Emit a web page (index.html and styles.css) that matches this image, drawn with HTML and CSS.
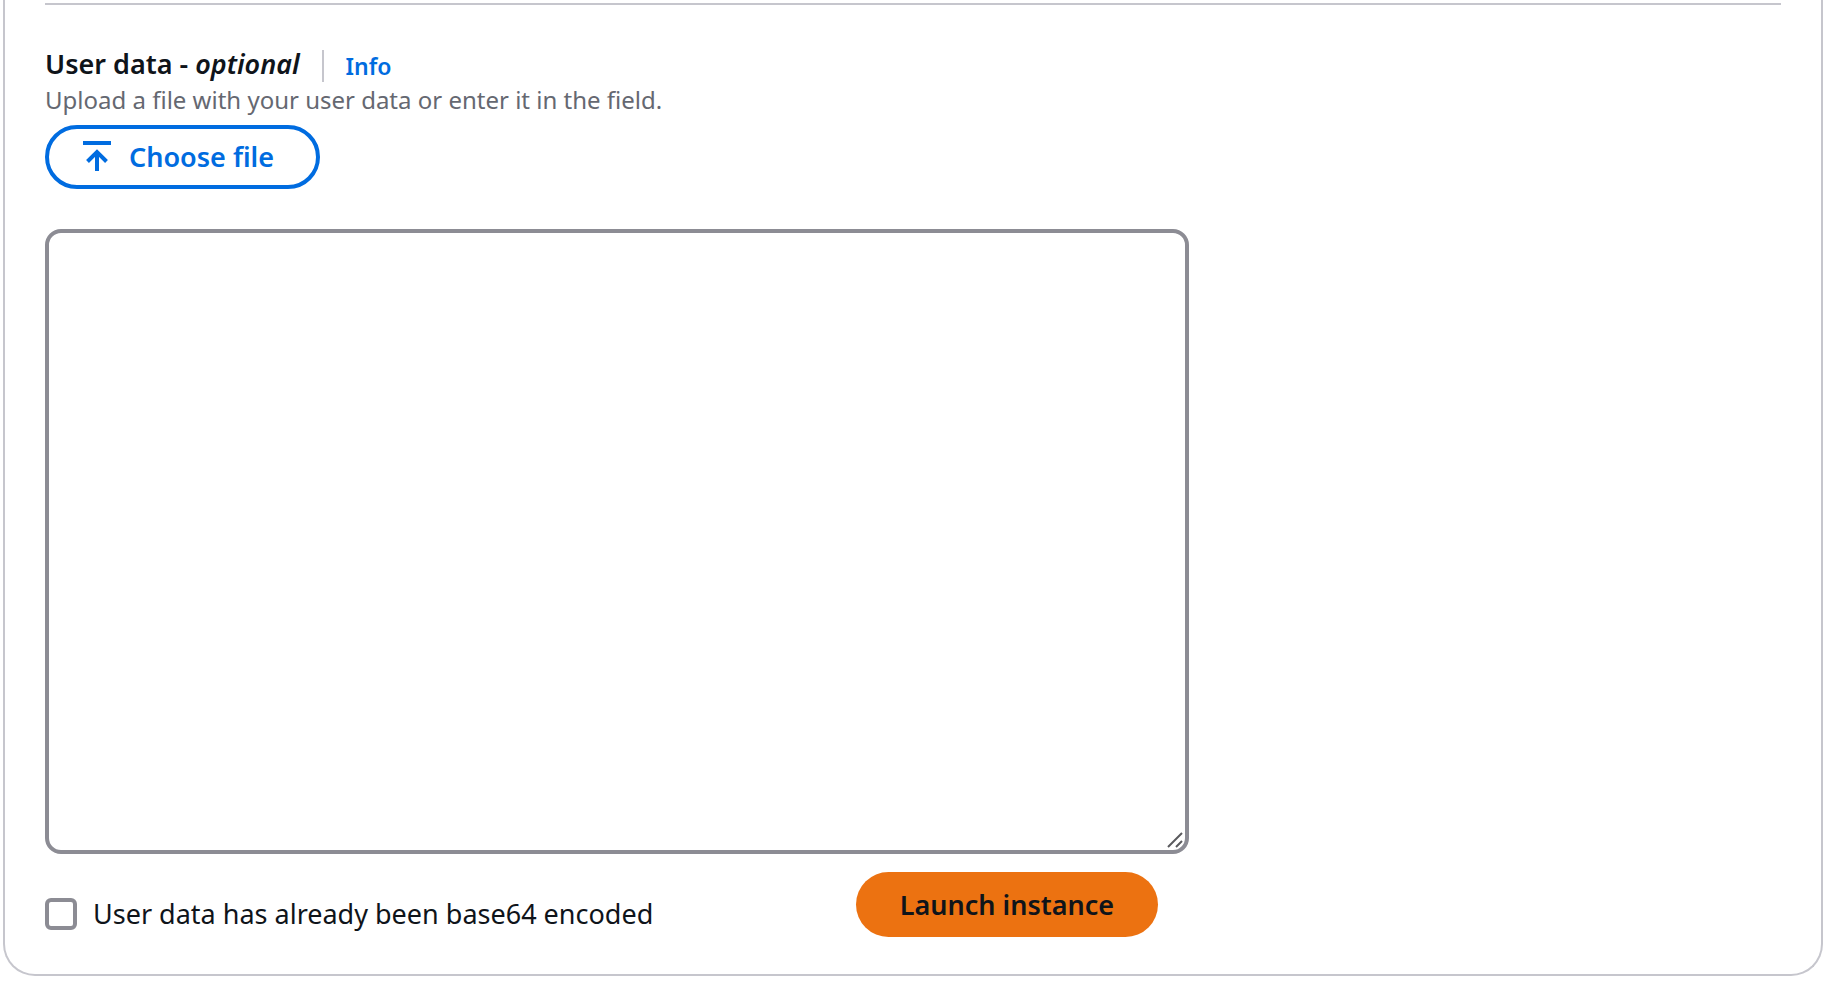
FILE: index.html
```html
<!DOCTYPE html>
<html lang="en">
<head>
<meta charset="utf-8">
<meta name="viewport" content="width=device-width, initial-scale=1">
<title>Launch an instance</title>
<link rel="stylesheet" href="styles.css">
</head>
<body>
<main class="card">
  <hr class="divider">
  <section class="user-data">
    <div class="heading">
      <label class="heading-label" for="user-data">User data - <em>optional</em></label>
      <a class="info-link" href="#">Info</a>
    </div>
    <p class="description" id="user-data-hint">Upload a file with your user data or enter it in the field.</p>
    <button class="button button-outline" type="button">
      <svg class="icon" viewBox="0 0 32 32" aria-hidden="true">
        <path d="M2 2h28M16 30V11M6.5 20.5L16 11l9.5 9.5"/>
      </svg>
      Choose file
    </button>
    <div class="field">
      <textarea class="textarea" id="user-data" aria-describedby="user-data-hint"></textarea>
      <svg class="grip" viewBox="0 0 16 16" aria-hidden="true">
        <path d="M1 15L15 1M9 15l6-6"/>
      </svg>
    </div>
    <div class="actions">
      <label class="check"><input class="check-box" type="checkbox">User data has already been base64 encoded</label>
      <button class="button button-primary" type="button">Launch instance</button>
    </div>
  </section>
</main>
</body>
</html>
```

FILE: styles.css
```css
* {
  box-sizing: border-box;
}

body {
  margin: 0;
  padding: 0 11px 24px 3px;
  background: #fff;
  color: #0f141a;
  font-family: "Noto Sans", "Open Sans", sans-serif;
  font-size: 27px;
  line-height: 36px;
}

.card {
  padding: 3px 40px 37px;
  border: 2px solid #c6c6cd;
  border-top: 0;
  border-radius: 0 0 32px 32px;
}

.divider {
  height: 2px;
  margin: 0;
  border: 0;
  background: #c6c6cd;
}

.user-data {
  width: calc((100% - 20px) * 2 / 3);
  padding-top: 41px;
}

.heading {
  display: flex;
  align-items: flex-end;
  gap: 22px;
  height: 36px;
}

.heading-label {
  font-weight: 600;
}

.info-link {
  padding-left: 22px;
  border-left: 2px solid #c6c6cd;
  color: #006ce0;
  font-size: 23px;
  font-weight: 600;
  line-height: 32px;
  text-decoration: none;
}

.description {
  margin: 0;
  color: #656871;
  font-size: 24px;
}

.button {
  display: flex;
  align-items: center;
  justify-content: center;
  height: 64px;
  border: 0;
  border-radius: 33px;
  font: inherit;
  font-weight: 600;
  white-space: nowrap;
}

.button-outline {
  justify-content: flex-start;
  gap: 16px;
  min-width: 275px;
  margin-top: 7px;
  padding: 0 32px;
  border: 4px solid #006ce0;
  background: #fff;
  color: #006ce0;
}

.button-primary {
  min-width: 302px;
  height: 65px;
  margin-right: 31px;
  padding: 0 40px;
  background: #ec7211;
  color: #0f141a;
}

.icon {
  width: 32px;
  height: 32px;
  fill: none;
  stroke: currentColor;
  stroke-width: 4;
}

.field {
  position: relative;
  margin-top: 40px;
}

.textarea {
  display: block;
  width: 100%;
  height: 625px;
  padding: 8px 24px;
  border: 4px solid #8c8c94;
  border-radius: 16px;
  background: #fff;
  color: inherit;
  font: inherit;
  resize: vertical;
}

.textarea::-webkit-resizer {
  background: transparent;
}

.grip {
  position: absolute;
  right: 6px;
  bottom: 6px;
  width: 16px;
  height: 16px;
  fill: none;
  stroke: #5a5a5e;
  stroke-width: 2;
  pointer-events: none;
}

.actions {
  display: flex;
  align-items: flex-start;
  justify-content: space-between;
  margin-top: 18px;
}

.check {
  display: flex;
  align-items: center;
  gap: 16px;
  padding-top: 24px;
}

.check-box {
  appearance: none;
  width: 32px;
  height: 32px;
  margin: 0;
  border: 4px solid #8c8c94;
  border-radius: 6px;
  background: #fff;
}

.check-box:checked {
  background: #006ce0;
}
```
